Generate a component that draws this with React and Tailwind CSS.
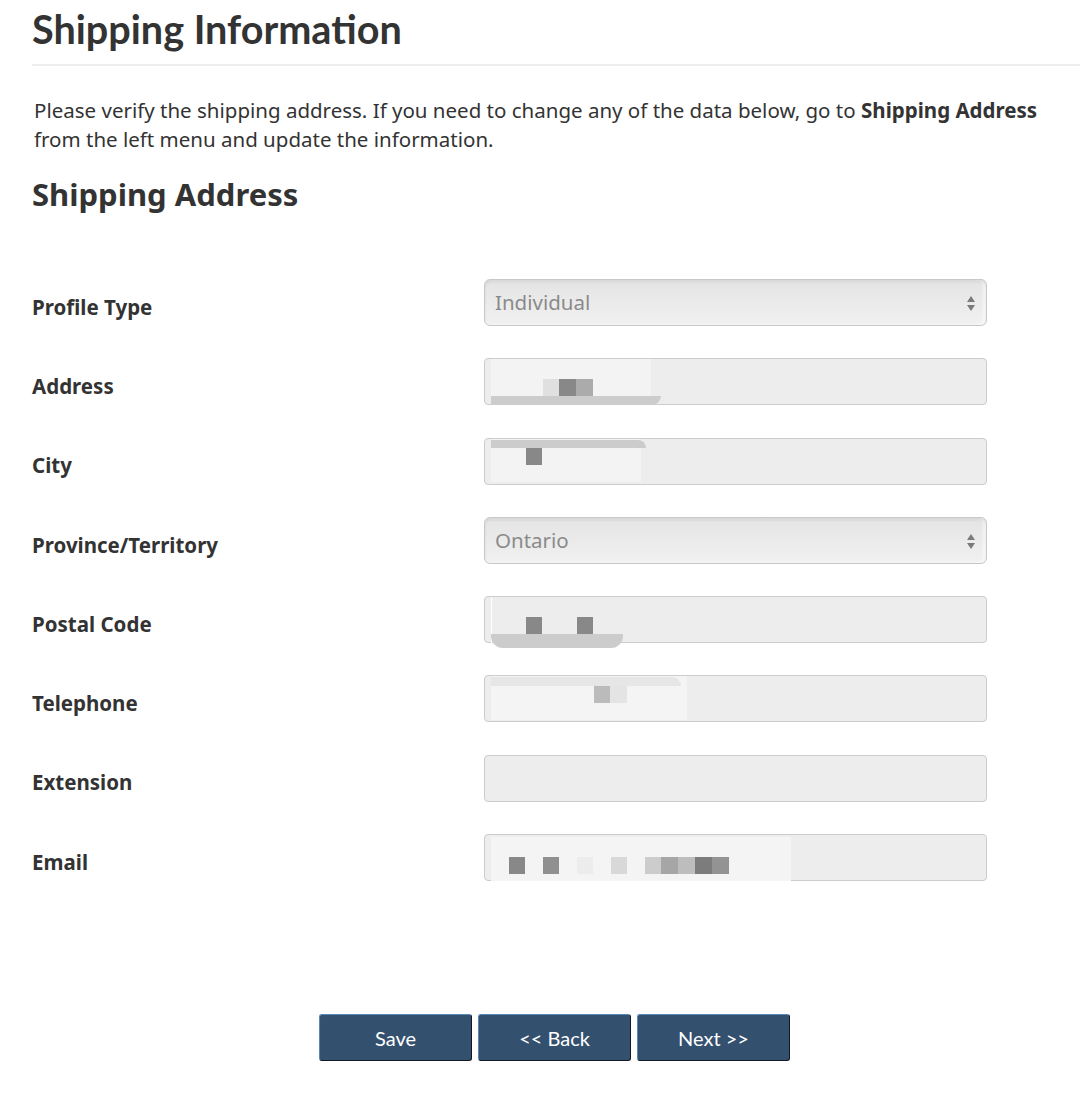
import React from 'react';

const rows = [
  { label: 'Profile Type', type: 'select', value: 'Individual' },
  { label: 'Address', blobs: 'address' },
  { label: 'City', blobs: 'city' },
  { label: 'Province/Territory', type: 'select', value: 'Ontario' },
  { label: 'Postal Code', blobs: 'postal' },
  { label: 'Telephone', blobs: 'phone' },
  { label: 'Extension' },
  { label: 'Email', blobs: 'email' },
];

// pixelated redaction marks, offsets relative to the field box
const marks = {
  address: [
    { x: 6, y: 0, w: 160, h: 46, c: '#f3f3f3', r: '0 0 0 0' },
    { x: 6, y: 37, w: 170, h: 9, c: '#cccccc', r: '0 0 12px 0' },
    { x: 58, y: 20, w: 16, h: 17, c: '#e0e0e0' },
    { x: 74, y: 20, w: 17, h: 17, c: '#888888' },
    { x: 91, y: 20, w: 17, h: 17, c: '#ababab' },
  ],
  city: [
    { x: 6, y: 0, w: 150, h: 43, c: '#f3f3f3' },
    { x: 6, y: 1, w: 155, h: 8, c: '#cccccc', r: '0 12px 0 0' },
    { x: 41, y: 9, w: 16, h: 17, c: '#888888' },
  ],
  postal: [
    { x: 6, y: 0, w: 1, h: 46, c: '#ffffff' },
    { x: 41, y: 20, w: 16, h: 17, c: '#888888' },
    { x: 92, y: 20, w: 16, h: 17, c: '#888888' },
    { x: 6, y: 37, w: 132, h: 14, c: '#cccccc', r: '0 0 12px 12px' },
  ],
  phone: [
    { x: 6, y: 0, w: 196, h: 44, c: '#f4f4f4' },
    { x: 6, y: 1, w: 190, h: 9, c: '#e6e6e6', r: '0 12px 0 0' },
    { x: 109, y: 10, w: 16, h: 17, c: '#bbbbbb' },
    { x: 125, y: 10, w: 17, h: 17, c: '#e4e4e4' },
  ],
  email: [
    { x: 6, y: 2, w: 300, h: 44, c: '#f4f4f4' },
    { x: 24, y: 22, w: 16, h: 17, c: '#888888' },
    { x: 58, y: 22, w: 16, h: 17, c: '#909090' },
    { x: 92, y: 22, w: 16, h: 17, c: '#ececec' },
    { x: 126, y: 22, w: 16, h: 17, c: '#d8d8d8' },
    { x: 160, y: 22, w: 16, h: 17, c: '#cccccc' },
    { x: 176, y: 22, w: 17, h: 17, c: '#a6a6a6' },
    { x: 193, y: 22, w: 17, h: 17, c: '#bdbdbd' },
    { x: 210, y: 22, w: 17, h: 17, c: '#7c7c7c' },
    { x: 227, y: 22, w: 17, h: 17, c: '#939393' },
  ],
};

function SelectField({ value }) {
  return (
    <div className="relative flex h-[47px] w-[503px] items-center rounded-[6px] border border-[#c8c8c8] bg-gradient-to-b from-[#e4e4e4] to-[#f1f1f1] pl-[10px] shadow-[inset_0_2px_3px_rgba(0,0,0,0.08),inset_-3px_0_3px_rgba(255,255,255,0.6)]">
      <span className="text-[20.5px] text-[#8a8a8a]">{value}</span>
      <svg className="absolute right-[10px] top-[15px]" width="10" height="17" viewBox="0 0 10 17">
        <path d="M5 1 L9 7 L1 7 Z" fill="#7a7a7a" />
        <path d="M1 10 L9 10 L5 16 Z" fill="#7a7a7a" />
      </svg>
    </div>
  );
}

function TextField({ blobs }) {
  return (
    <div className="relative h-[47px] w-[503px] rounded-[4px] border border-[#cccccc] bg-[#ededed]">
      {(marks[blobs] || []).map((m, i) => (
        <span
          key={i}
          className="absolute"
          style={{ left: m.x, top: m.y, width: m.w, height: m.h, background: m.c, borderRadius: m.r }}
        />
      ))}
    </div>
  );
}

function NavButton({ children }) {
  return (
    <button className="h-[47px] w-[153px] rounded-[3px] border border-t-[#5b86b8] border-l-[#5b86b8] border-r-[#111a24] border-b-[#111a24] bg-[#34506f] font-['Lato'] text-[20px] text-white">
      {children}
    </button>
  );
}

export default function App() {
  return (
    <div className="min-h-[1097px] bg-white pl-[32px] font-['Noto_Sans',sans-serif] text-[#333333]">
      {/* Page title */}
      <h1 className="pt-[6px] pb-[12px] font-['Lato',sans-serif] text-[39.6px] font-bold leading-[46px] text-[#333333]">
        Shipping Information
      </h1>
      <div className="h-[2px] bg-[#eeeeee]" />

      <p className="mt-[30px] pl-[2px] text-[20.5px] leading-[29px]">
        Please verify the shipping address. If you need to change any of the data below, go to{' '}
        <b>Shipping Address</b>
        <br />
        from the left menu and update the information.
      </p>

      <h2 className="mt-[20px] text-[31px] font-bold leading-[40px]">Shipping Address</h2>

      {/* Form rows */}
      <div className="mt-[65px] flex flex-col gap-[32.3px]">
        {rows.map((r) => (
          <div key={r.label} className="flex items-center">
            <label className="w-[452px] pt-[9px] text-[20.5px] font-bold">{r.label}</label>
            {r.type === 'select' ? <SelectField value={r.value} /> : <TextField blobs={r.blobs} />}
          </div>
        ))}
      </div>

      <div className="mt-[133px] flex justify-center gap-[6px] pr-[3px]">
        <NavButton>Save</NavButton>
        <NavButton>&lt;&lt; Back</NavButton>
        <NavButton>Next &gt;&gt;</NavButton>
      </div>
    </div>
  );
}
